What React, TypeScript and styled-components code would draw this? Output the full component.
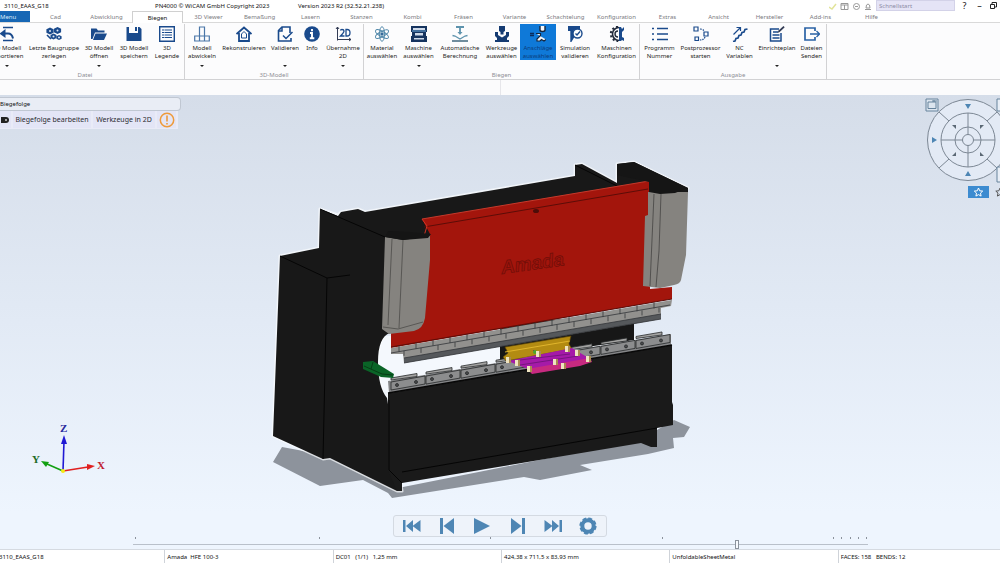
import React from "react";
import styled, { createGlobalStyle } from "styled-components";

const navy = "#1a4a8c";
const steel = "#4e86b4";

const GlobalStyle = createGlobalStyle`
  * { box-sizing: border-box; }
  body { margin: 0; font-family: "Noto Sans", "Open Sans", sans-serif; font-size: 6px; line-height: 8px; color: #2b2b30; background: #fff; }
  button, input { font: inherit; color: inherit; margin: 0; padding: 0; border: 0; background: none; }
  svg { display: block; }
`;

const Page = styled.div`
  display: flex;
  flex-direction: column;
  min-height: 100vh;
  overflow: hidden;
`;

const TitleBar = styled.header`
  display: grid;
  grid-template-columns: 151px 143px 1fr auto;
  align-items: center;
  height: 11px;
  padding-left: 4px;
  color: #111;
  white-space: nowrap;
`;

const TitleTools = styled.div`
  display: flex;
  align-items: center;
  gap: 4px;
`;

const Search = styled.input`
  width: 79px;
  height: 11px;
  padding-left: 2px;
  background: #e5e4f6;
  border: 1px solid #d3d2e8;
  &::placeholder { color: #8d8ca6; opacity: 1; }
`;

const WindowButtons = styled.div`
  display: flex;
  width: 41px;
  justify-content: space-between;
`;

const WindowButton = styled.button`
  width: 11px;
  height: 11px;
  line-height: 11px;
  font-size: 9px;
`;

const Tabs = styled.nav`
  display: flex;
  height: 12px;
  border-bottom: 1px solid #d9d9d9;
`;

const Tab = styled.button<{ $active?: boolean; $menu?: boolean }>`
  flex: none;
  width: ${(p) => (p.$menu ? 30 : 51)}px;
  height: ${(p) => (p.$active ? 12 : 11)}px;
  line-height: 12px;
  color: ${(p) => (p.$menu ? "#dcebfa" : p.$active ? "#111" : "#7a7a80")};
  background: ${(p) => (p.$menu ? "#1767b5" : "#fff")};
  text-align: ${(p) => (p.$menu ? "left" : "center")};
  border: ${(p) => (p.$active ? "1px solid #d0d0d0" : "0")};
  border-bottom: 0;
`;

const Ribbon = styled.div`
  display: flex;
  height: 57px;
  padding-top: 1px;
  margin-left: -14px;
  background: #fcfcfd;
  border-bottom: 1px solid #d2d2d4;
`;

const Group = styled.section`
  display: flex;
  flex-direction: column;
  justify-content: space-between;
  border-right: 1px solid #d2d2d4;
`;

const GroupTools = styled.div`
  display: flex;
`;

const GroupName = styled.div`
  color: #8e8e95;
  text-align: center;
`;

const ToolButton = styled.button<{ $w: number; $active?: boolean }>`
  display: flex;
  flex-direction: column;
  align-items: center;
  width: ${(p) => p.$w}px;
  height: 46px;
  padding-top: 2px;
  line-height: 8px;
  white-space: pre;
  color: ${(p) => (p.$active ? "#0b3d7c" : "#1c1c22")};
  background: ${(p) => (p.$active ? "linear-gradient(#0f79d8 36px, transparent 36px)" : "none")};
`;

const ToolLabel = styled.span`
  height: 17px;
  margin-top: 2px;
`;

const Caret = styled.i`
  margin-top: 4px;
  border: 2px solid transparent;
  border-top-color: #222;
  border-bottom: 0;
`;

const Strip = styled.div`
  height: 15px;
  background: linear-gradient(#e6e6ea, #e6e6ea) 50% 0 / 1px 100% no-repeat #fbfbfc;
`;

const Viewport = styled.main`
  position: relative;
  flex: 1;
  background: linear-gradient(#d5dde9, #e2eaf5 50%, #eef5fe 92%);
`;

const Scene = styled.svg`
  width: 100%;
  height: auto;
`;

const Panel = styled.aside`
  position: absolute;
  top: 2px;
  left: 0;
`;

const PanelTitle = styled.h2`
  width: 181px;
  height: 14px;
  margin: 0;
  font-size: 6px;
  font-weight: 400;
  line-height: 13px;
  color: #111;
  background: #e9edf5;
  border: 1px solid #c0c7d2;
  border-left: 0;
  border-radius: 0 4px 4px 0;
`;

const PanelTools = styled.div`
  display: flex;
  gap: 2px;
  width: 178px;
  height: 18px;
  background: #e9ebf7;
`;

const PanelButton = styled.button<{ $w: number }>`
  display: flex;
  align-items: center;
  justify-content: center;
  width: ${(p) => p.$w}px;
  height: 17px;
  font-size: 7px;
  white-space: nowrap;
  background: #e3e5f6;
`;

const Navigator = styled.div`
  position: absolute;
  top: 0;
  right: 0;
  width: 80px;
  overflow: hidden;
`;

const Player = styled.div`
  position: absolute;
  bottom: 12px;
  left: 50%;
  display: flex;
  justify-content: space-around;
  width: 214px;
  height: 22px;
  transform: translateX(-50%);
  background: #eef3fa;
  border: 1px solid #d4dae2;
  border-radius: 3px;
`;

const PlayerButton = styled.button`
  width: 22px;
  height: 20px;
  display: grid;
  place-items: center;
`;

const Timeline = styled.div`
  position: absolute;
  right: 13.2%;
  bottom: 0;
  left: 13.3%;
  height: 13px;
`;

const Ticks = styled.svg`
  width: 100%;
  height: 4px;
`;

const Range = styled.input`
  display: block;
  width: 100%;
  height: 9px;
  appearance: none;
  background: linear-gradient(#b9c0ca, #b9c0ca) 0 4px / 100% 1px no-repeat;
  &::-webkit-slider-thumb {
    appearance: none;
    width: 4px;
    height: 9px;
    background: #f6f9fd;
    border: 1px solid #8b929c;
  }
`;

const StatusBar = styled.footer`
  display: grid;
  grid-template-columns: repeat(6, 1fr);
  height: 14px;
  margin: 0 -6px 0 -4px;
  border-top: 1px solid #d5dae1;
`;

const StatusCell = styled.div`
  padding-left: 2px;
  line-height: 14px;
  color: #111;
  white-space: pre;
  border-left: 1px solid #cfd3d9;
`;

const Icon = ({ children }: { children: React.ReactNode }) => (
  <svg width="16" height="16" viewBox="0 0 16 16" fill="none" stroke={navy} strokeWidth="1.4" aria-hidden="true">
    {children}
  </svg>
);

const part = (x: number, y: number, r: number) => (
  <g>
    <path d={`M${x} ${y - r}l${r} ${r / 2}v${r}l${-r} ${r / 2}l${-r} ${-r / 2}v${-r}z`} fill={navy} stroke="none" />
    <circle cx={x} cy={y} r="1" fill="#dfe8f4" stroke="none" />
  </g>
);

const icons: Record<string, React.ReactNode> = {
  export: <g><path d="M14 1.500H4M14 14.500H4" /><path d="M3 7.500h6q4 0 5 5" strokeWidth="2" /><path d="M6.500 3v9L0.500 7.500z" fill={navy} stroke="none" /></g>,
  split: <g>{part(4, 5, 3.6)}{part(11.500, 4.500, 3.600)}{part(7.500, 10.500, 3)}{part(13, 11.500, 2.600)}<path d="M1 9l4 4" strokeWidth="1.600" /></g>,
  open: <g fill={navy} stroke="none"><path d="M0 2.500h5.500l1.500 2h6.500v2H4L1.500 13H0z" /><path d="M4.500 7.500H16L13 14H2z" /></g>,
  save: <path d="M0.500 1H3v6h9V1h1.500L15.500 3v12H0.500zM9 1h2v4H9z" fill={navy} stroke="none" />,
  legend: <g><path d="M0.700 0.700h14.600v14.600H0.700z" /><path d="M3 4h10M3 6.500h10M3 9h10M3 11.500h10" strokeWidth="1" strokeDasharray="2 0.500 8" /></g>,
  unfold: <path d="M5.500 1h5v9h4.800v5H0.700v-5h4.800zM5.500 10h5M5.500 10v5M10.500 10v5" strokeWidth="1.200" stroke="#4a76a8" />,
  house: <g><path d="M0.500 8L8 1.500 15.500 8M3 7v8h10V7" strokeWidth="1.800" /><path d="M8 5.500L10.500 8v4h-5V8z" strokeWidth="1" /></g>,
  validate: <g><path d="M13 7V1H5L1.500 4.500V15H14v-3" strokeWidth="1.600" /><path d="M5 1v4H1.500M6 9.500l3 3L15.500 6" strokeWidth="1.500" /></g>,
  info: <g><circle cx="8" cy="8" r="7.800" fill={navy} stroke="none" /><path d="M8 3v2.200M6 7h2v5M5.800 12.300h4.500" stroke="#fff" strokeWidth="1.900" /></g>,
  two: <g><path d="M2.500 1v13.500M2.500 13.500H16M1 3l1.500-2L4 3M14 12l2 1.500-2 1.500" stroke="#333c55" strokeWidth="1" /><path d="M5.500 4.500q0-1 1.500-1 2 0 2 1.500 0 1.500-3.500 5H9.500M11 3.500V10h1q3 0 3-3.300T12 3.500z" strokeWidth="1.300" /></g>,
  atom: <g stroke="#4e86a8" strokeWidth="0.900"><ellipse cx="8" cy="8" rx="2.600" ry="7.300" /><ellipse cx="8" cy="8" rx="2.600" ry="7.300" transform="rotate(60 8 8)" /><ellipse cx="8" cy="8" rx="2.600" ry="7.300" transform="rotate(120 8 8)" /><circle cx="8" cy="8" r="1.300" fill={navy} /></g>,
  machine: <g stroke="none"><path d="M0 0h16v6h-1v4h1v6H0v-6h1V6H0z" fill="#16345f" /><path d="M2 2h12v2H2zM4 7h8v2.500H4zM3 12h10v1.500H3z" fill="#cfdae9" /><path d="M1 5h14" stroke="#5a8dbc" /></g>,
  auto: <g stroke="#5e93ad"><path d="M4 1h8M8 1v6" strokeWidth="1.800" /><path d="M5.500 6h5L8 9z" fill="#5e93ad" stroke="none" /><path d="M0.500 9.500L3 10l5 3 5-3 2.500-.5" strokeWidth="1.300" /><path d="M0 15h16" stroke="#345e75" /></g>,
  tools: <g stroke="none" fill="#153b72"><path d="M5 0h6v5L9.500 6v2.500h-3V6L5 5z" /><path d="M1 6h3v3l4 2.500L12 9V6h3v4l-2 2v2h2v2H1v-2h2v-2l-2-2z" /></g>,
  stops: <g><path d="M0 7.500h4M0 9.500h4" stroke="#0b2c5c" /><path d="M10 0v4q0 1.500 2.500 1.500T15 4V0" fill="#f5f7fa" stroke="#17263c" /><path d="M6 7.500h4.500v2L7 13v2h3l1.500-1.500L14 15l2-1.500" fill="#f5f7fa" stroke="#17263c" strokeWidth="1.200" /></g>,
  simulate: <g><path d="M1 0h12v5L8 6v4l-3 5H4V5H1z" fill={navy} stroke="none" /><circle cx="10.500" cy="7.500" r="4.500" fill="#fff" /><path d="M8.500 7.500L10 9l3-3.500M4 2v14" /></g>,
  config: <g><path d="M10 1.500A6.500 6.500 0 0 0 10 14.500" stroke="#222b3b" strokeWidth="1.600" /><path d="M9 0.800A7.200 7.200 0 0 0 9 15.200" stroke="#222b3b" strokeWidth="2" strokeDasharray="2 2.200" /><path d="M9 5a3 3 0 0 0 0 6" stroke="#222b3b" /><path d="M10 1h2l1 2 2-2v3l-2 2v5l2 1v3l-2-1-1 1h-2z" fill={navy} stroke="none" /></g>,
  list: <path d="M0 2.500h2M0 8h2M0 13.500h2M5 2.500h11M5 8h11M5 13.500h11" strokeWidth="1.500" />,
  post: <g strokeWidth="1.200"><path d="M1 1h4v4H1zM11 6h4v4h-4zM2 11h3.500v3.500H2z" /><path d="M7 3q3 0 4 2M12 11q-1 3-5 3" strokeDasharray="1.500 1" /></g>,
  nc: <g><path d="M1 15.500l2-.5 1-2.500 2-.5 1-2.500 2-.5 1-2.500 2-.5 1-2.500 2.500-.5" strokeWidth="1.700" /><path d="M1.500 8.500L8 2M4.500 1.500h4V5" strokeWidth="1.200" /></g>,
  plan: <g><path d="M10 3H1.500v12H12V7" strokeWidth="1.500" /><path d="M4 6h5M3.500 9h7M3.500 12h7" strokeWidth="1.300" /><path d="M8.500 7l1-2.500L14.500 0l1.200 1.200-5 4.800z" fill="#333c55" stroke="none" /></g>,
  send: <g stroke="#2a62a5"><path d="M11 5V2H1v12h10v-3" strokeWidth="1.700" /><path d="M6 8h9M12.500 5L15.500 8l-3 3" strokeWidth="1.300" /></g>,
};

type Tool = { w: number; label: string; icon: string; menu?: boolean; active?: boolean };
const groups: { name: string; tools: Tool[] }[] = [
  {
    name: "Datei",
    tools: [
      { w: 42, label: "3D Modell\nexportieren", icon: "export", menu: true },
      { w: 52, label: "Letzte Baugruppe\nzerlegen", icon: "split", menu: true },
      { w: 38, label: "3D Modell\nöffnen", icon: "open", menu: true },
      { w: 32, label: "3D Modell\nspeichern", icon: "save" },
      { w: 34, label: "3D\nLegende", icon: "legend" },
    ],
  },
  {
    name: "3D-Modell",
    tools: [
      { w: 34, label: "Modell\nabwickeln", icon: "unfold", menu: true },
      { w: 50, label: "Rekonstruieren", icon: "house" },
      { w: 32, label: "Validieren", icon: "validate", menu: true },
      { w: 22, label: "Info", icon: "info" },
      { w: 40, label: "Übernahme\n2D", icon: "two", menu: true },
    ],
  },
  {
    name: "Biegen",
    tools: [
      { w: 36, label: "Material\nauswählen", icon: "atom" },
      { w: 37, label: "Maschine\nauswählen", icon: "machine", menu: true },
      { w: 46, label: "Automatische\nBerechnung", icon: "auto" },
      { w: 37, label: "Werkzeuge\nauswählen", icon: "tools" },
      { w: 36, label: "Anschläge\nauswählen", icon: "stops", active: true },
      { w: 38, label: "Simulation\nvalidieren", icon: "simulate" },
      { w: 45, label: "Maschinen\nKonfiguration", icon: "config" },
    ],
  },
  {
    name: "Ausgabe",
    tools: [
      { w: 39, label: "Programm\nNummer", icon: "list" },
      { w: 43, label: "Postprozessor\nstarten", icon: "post" },
      { w: 35, label: "NC\nVariablen", icon: "nc" },
      { w: 40, label: "Einrichteplan", icon: "plan", menu: true },
      { w: 29, label: "Dateien\nSenden", icon: "send" },
    ],
  },
];

const tabs = ["Cad", "Abwicklung", "Biegen", "3D Viewer", "Bemaßung", "Lasern", "Stanzen", "Kombi", "Fräsen", "Variante", "Schachtelung", "Konfiguration", "Extras", "Ansicht", "Hersteller", "Add-ins", "Hilfe"];

const playerIcons: { name: string; shape: React.ReactNode }[] = [
  { name: "Zum Anfang", shape: <path d="M1 4h2.500v12H1zM4 10l7-6v12zM10.500 10L18.500 4v12z" /> },
  { name: "Schritt zurück", shape: <path d="M3 2h3v16H3zM6.500 10L17 2v16z" /> },
  { name: "Abspielen", shape: <path d="M2 2l16 8-16 8z" /> },
  { name: "Schritt vor", shape: <path d="M17 2h-3v16h3zM13.500 10L3 2v16z" /> },
  { name: "Zum Ende", shape: <path d="M19 4h-2.500v12H19zM16 10L9 4v12zM9.500 10L1.500 4v12z" /> },
  { name: "Einstellungen", shape: <g fill="none" stroke={steel}><circle cx="10" cy="10" r="5.700" strokeWidth="4" /><circle cx="10" cy="10" r="7.600" strokeWidth="2" strokeDasharray="3.970 2" /></g> },
];

const tags = [[508, 360], [517, 363], [529, 369], [538, 354], [567, 349], [577, 353], [588, 359], [555, 362], [563, 366]];

// y position of a point on the slanted front edges, which rise to the right
const slope = (x: number, y0: number) => y0 - (x - 391) * 0.1695;

const Machine = () => (
  <Scene viewBox="0 95 1000 454" role="img" aria-label="Abkantpresse">
    <path d="M273 462L282 447L325 455L398 488L640 440L674 420L690 427L684 437L673 438L674 448L648 454L580 465L592 470L540 480L524 477L392 498L388 493L363 480L320 486Z" fill="#8d939c" />
    <path d="M378 336H636V345L671 334V347L389 398L378 380Z" fill="#f4f8fd" />
    <path d="M500 325L634 312V340L500 360Z" fill="#171717" />
    <g stroke="#fbfdff" strokeWidth="3" strokeLinejoin="round" fill="#fbfdff" opacity="0.700">
      <path d="M280 256L319 248L320 209L338 215L341 212L358 209L365 212L575 176V165L582 164L617 183V164L634 162L688 188L648 200L427 240L390 330Q378 337 378 362T387 398L402 491H397L330 458L323 459L273 436Z" />
    </g>
    <path d="M280 256L319 248L320 209L338 216L341 212L358 209L365 212L575 176V165L582 164L617 183V164L634 162L688 188V193L648 200L427 240V330L390 333Q378 337 378 362T387 398L402 491H397L330 458L323 459L273 436Z" fill="#181818" />
    <path d="M388 393L672 345V402L673 405V425L657 428V447H651L641 443L402 483V491H397L388 470Z" fill="#1a1a1a" />
    <path d="M280 256L327 278L350 275M327 278L323 459M320 209L385 237M389 400V470L402 483M402 472L657 428M575 165L617 186" fill="none" stroke="#050505" />
    <path d="M422 219L649 181L650 289L672 287V299L391 348V260L430 234Z" fill="#a3150c" />
    <path d="M424 227L648 189M391 347L672 299" fill="none" stroke="#5c0d08" />
    <path d="M422 219L649 181" stroke="#c43a2c" />
    <path d="M422 219L427 226L424 236" fill="none" stroke="#d13324" />
    <ellipse cx="536" cy="211" rx="3" ry="2" fill="#4d0d09" />
    <text x="502" y="274" transform="rotate(-8 502 274)" fontFamily="Liberation Sans, sans-serif" fontSize="19" fontWeight="700" fontStyle="italic" fill="#9c130b" stroke="#6e0e08" strokeWidth="0.700">Amada</text>

    <path d="M385 237L403 240L430 236V260L425 318Q423 329 414 331L389 334L382 329Z" fill="#85837f" />
    <path d="M385 237L388 231L410 232L431 234L428 238L403 240Z" fill="#151515" />
    <path d="M392 239L388 325M403 240L399 328M383 327L398 329L423 322" fill="none" stroke="#4c4b49" strokeWidth="0.800" />
    <path d="M648 192H688L686 255L681 280Q680 284 674 285L660 288L643 286L645 216L648 215Z" fill="#85837f" />
    <path d="M649 182L617 175V164L634 162L688 188L675 193L660 194L649 192Z" fill="#151515" />
    <path d="M654 194L650 286M661 194L659 251L656 287" fill="none" stroke="#454442" strokeWidth="0.800" />

    <path d="M391 348L672 300L671 306L661 308V319L404 363L403 354L391 354Z" fill="#92918e" />
    <path d="M404 358L661 314V319L404 363Z" fill="#55585b" />
    <path d="M391 353L670 305M404 358L661 314M404 363L661 319" fill="none" stroke="#34363a" strokeWidth="0.800" />
    {Array.from({ length: 16 }, (_, i) => {
      const x = 399 + i * 17;
      return <path key={x} d={`M${x} ${slope(x, 347)}v6M${x + 5} ${slope(x + 5, 353)}v5`} stroke="#35373a" strokeWidth="0.800" />;
    })}

    <path d="M388 381L671 334V345L389 393Z" fill="#858688" />
    {Array.from({ length: 8 }, (_, i) => {
      const x = 391 + i * 35;
      const y = slope(x, 378);
      return (
        <g key={x} stroke="#26282a" strokeWidth="0.800">
          <path d={`M${x} ${y + 2}v-2l26-4.500v3z`} fill="#a3a3a2" />
          <path d={`M${x} ${y + 4}l34-6v8l-34 6z`} fill="#8c8d8e" />
          <circle cx={x + 6} cy={y + 7} r="1.500" fill="#4a4b4d" />
          <circle cx={x + 25} cy={y + 4} r="1.500" fill="#4a4b4d" />
        </g>
      );
    })}
    <path d="M388 393L672 345" stroke="#080808" strokeWidth="1.500" />

    <path d="M505 347L571 336L569 344L572 349L506 361L503 357L508 353Z" fill="#b38b12" stroke="#59440a" strokeWidth="0.700" />
    <path d="M505 352L570 341" stroke="#e0b52d" />
    <path d="M508 361L572 348L592 360L533 371Z" fill="#a51aa8" />
    <path d="M527 369L590 358L592 362L580 366L532 374Z" fill="#c72a80" />
    <path d="M533 350l4 4M520 360l50-6M520 365l58-9" stroke="#60126b" strokeWidth="0.700" />
    <circle cx="535" cy="352" r="2" fill="#4aa62c" />
    {tags.map(([x, y]) => (
      <g key={x}>
        <path d={`M${x - 2} ${y - 3}h5v6h-5z`} fill="#efe4c0" />
        <path d={`M${x + 1} ${y - 3}h2v6h-2z`} fill="#a98a50" />
      </g>
    ))}
    <path d="M363 362L373 361L394 374L393 378L381 377L363 369Z" fill="#0a6427" />
    <path d="M364 366L382 374L393 375M373 362L371 369" fill="none" stroke="#063d16" />

    <path d="M63 471L64 441" stroke="#2019d4" strokeWidth="1.600" />
    <path d="M64 435L67 444H61Z" fill="#2019d4" />
    <path d="M63 471L88 467" stroke="#e02020" strokeWidth="1.600" />
    <path d="M95 466L87 464V470Z" fill="#e02020" />
    <path d="M63 471L47 464" stroke="#12a012" strokeWidth="1.600" />
    <path d="M41 461L49 462L46 467Z" fill="#12a012" />
    <circle cx="63" cy="471" r="2" fill="#f5ea14" />
    <g fontFamily="Liberation Serif, serif" fontSize="11" fontWeight="700">
      <text x="60" y="432" fill="#28289c">Z</text>
      <text x="32" y="463" fill="#1c6a26">Y</text>
      <text x="97" y="469" fill="#c01c30">X</text>
    </g>
  </Scene>
);

const Compass = () => (
  <Navigator>
    <svg width="80" height="110" viewBox="920 95 80 110" fill="none" stroke="#7c8794" strokeWidth="1">
      <circle cx="968" cy="140" r="40.500" fill="#e3eaf5" />
      <circle cx="968" cy="140" r="27" />
      <circle cx="968" cy="140" r="13" />
      <circle cx="968" cy="140" r="5.500" />
      <path d="M941 140h22M973 140h22M968 113v22M968 145v22M939 112l10 9M939 168l10-9M997 112l-10 9M997 168l-10-9" />
      <g fill={steel} stroke="none">
        <path d="M965 104h6l-3 5zM965 176h6l-3-5zM932 137v6l5-3z" />
        <path d="M952 125h4v4zM984 125h-4v4zM952 156h4v-4zM984 156h-4v-4z" fill="#5b6875" />
      </g>
      <g stroke="#66839c">
        <path d="M926 99h12v12h-12z" fill="#dce5ef" />
        <path d="M928 102h8v6.500h-8zM934 102v-2M932 101h5" />
        <path d="M997 99h12v12h-12zM997 167h12v15h-12z" fill="#e8eef6" />
      </g>
      <path d="M968 186h21v12h-21z" fill="#3c8bd0" stroke="none" />
      <path d="M978.500 188l1.200 2.800 3 .3-2.200 2 .6 3-2.600-1.500-2.600 1.500.6-3-2.200-2 3-.3z" stroke="#fff" />
      <path d="M1000 188l-1.200 2.800-3 .3 2.200 2-.6 3 2.600-1.500" stroke="#555" />
    </svg>
  </Navigator>
);

export default function App() {
  return (
    <Page>
      <GlobalStyle />
      <TitleBar>
        <span>3110_EAAS_G18</span>
        <span>PN4000 © WiCAM GmbH Copyright 2023</span>
        <span>Version 2023 R2 (32.52.21.238)</span>
        <TitleTools>
          <svg width="43" height="10" viewBox="0 0 43 10" fill="none" stroke="#999" aria-hidden="true">
            <path d="M0 6l3 2 4-5" stroke="#e2e49a" strokeWidth="1.500" />
            <path d="M12 2.500h7v6h-7zM12 4h7M15.500 4v4" />
            <circle cx="27.500" cy="5.500" r="3" />
            <path d="M26 5.500h3" />
            <path d="M36 8.500h6M37 7q0-4 2-4t2 4z" />
          </svg>
          <Search aria-label="Schnellstart" placeholder="Schnellstart" />
          <WindowButtons>
            <WindowButton aria-label="Hilfe">?</WindowButton>
            <WindowButton aria-label="Minimieren">–</WindowButton>
            <WindowButton aria-label="Wiederherstellen">
              <svg width="9" height="9" viewBox="0 0 9 9" fill="none" stroke="#222"><path d="M1.500 3.500h4v4h-4zM3 3V1.500h4.500V6H6" /></svg>
            </WindowButton>
          </WindowButtons>
        </TitleTools>
      </TitleBar>
      <Tabs>
        <Tab $menu>Menu</Tab>
        {tabs.map((t) => <Tab key={t} $active={t === "Biegen"}>{t}</Tab>)}
      </Tabs>
      <Ribbon>
        {groups.map((g) => (
          <Group key={g.name}>
            <GroupTools>
              {g.tools.map((t) => (
                <ToolButton key={t.label} $w={t.w} $active={t.active}>
                  <Icon>{icons[t.icon]}</Icon>
                  <ToolLabel>{t.label}</ToolLabel>
                  {t.menu && <Caret />}
                </ToolButton>
              ))}
            </GroupTools>
            <GroupName>{g.name}</GroupName>
          </Group>
        ))}
      </Ribbon>
      <Strip />
      <Viewport>
        <Machine />
        <Panel>
          <PanelTitle>Biegefolge</PanelTitle>
          <PanelTools>
            <PanelButton $w={11} aria-label="Ansicht aufnehmen">
              <svg width="10" height="8" viewBox="0 0 10 8"><path d="M0 1h5q3 0 3 3T5 7H0z" fill="#222" /><circle cx="5" cy="4" r="1" fill="#ccc" /></svg>
            </PanelButton>
            <PanelButton $w={78}>Biegefolge bearbeiten</PanelButton>
            <PanelButton $w={62}>Werkzeuge in 2D</PanelButton>
            <PanelButton $w={19} aria-label="Warnung">
              <svg width="16" height="16" viewBox="0 0 16 16" fill="none" stroke="#ee9a3a"><circle cx="8" cy="8" r="6.700" strokeWidth="1.500" /><path d="M8 3.500v6M8 11v1.500" strokeWidth="1.600" /></svg>
            </PanelButton>
          </PanelTools>
        </Panel>
        <Compass />
        <Player>
          {playerIcons.map((p) => (
            <PlayerButton key={p.name} aria-label={p.name}>
              <svg width="20" height="20" viewBox="0 0 20 20" fill={steel}>{p.shape}</svg>
            </PlayerButton>
          ))}
        </Player>
        <Timeline>
          <Ticks viewBox="0 0 735 4" preserveAspectRatio="none" stroke="#8b929c">
            <path d="M2.500 1v2M186.500 1v2M357.500 1v2M529.500 1v2M700.500 1v2M708.500 1v2M717.500 1v2M725.500 1v2M733.500 1v2" />
          </Ticks>
          <Range type="range" aria-label="Simulationsschritt" min="0" max="1000" defaultValue="824" />
        </Timeline>
      </Viewport>
      <StatusBar>
        <StatusCell>3110_EAAS_G18</StatusCell>
        <StatusCell>Amada  HFE 100-3</StatusCell>
        <StatusCell>DC01   (1/1)   1,25 mm</StatusCell>
        <StatusCell>424,38 x 711,5 x 83,93 mm</StatusCell>
        <StatusCell>UnfoldableSheetMetal</StatusCell>
        <StatusCell>FACES: 158   BENDS: 12</StatusCell>
      </StatusBar>
    </Page>
  );
}
